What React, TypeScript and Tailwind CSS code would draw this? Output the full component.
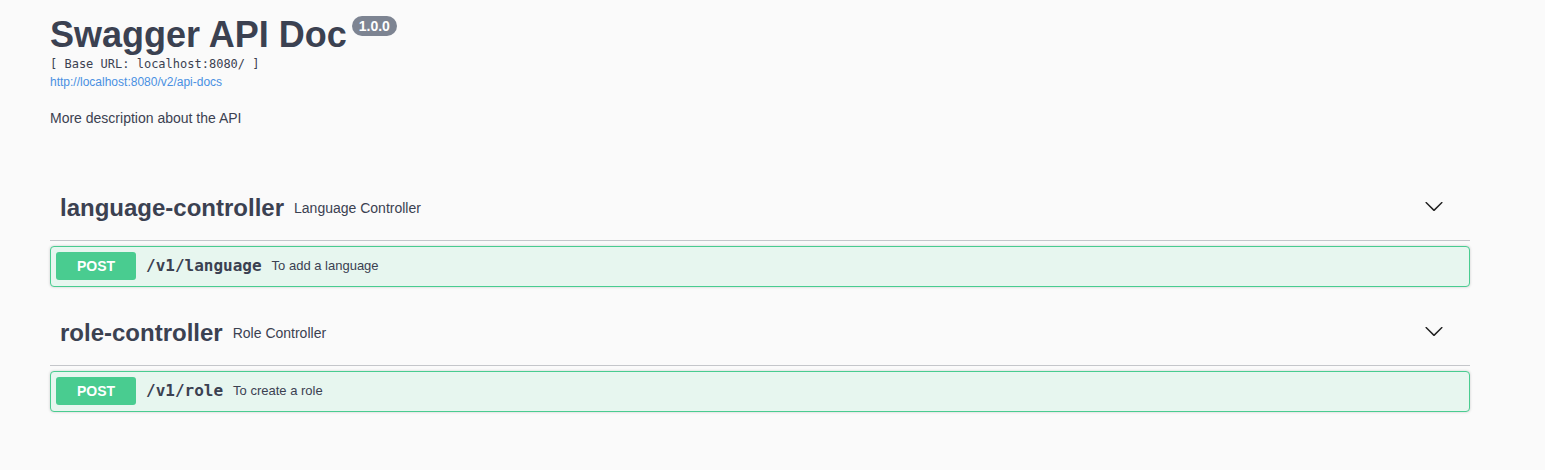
const sans = "font-['Liberation_Sans',Arial,sans-serif]";
const mono = "font-['DejaVu_Sans_Mono',monospace]";

type Op = { method: string; path: string; summary: string };
type Tag = { name: string; description: string; ops: Op[] };

const tags: Tag[] = [
    {
        name: "language-controller",
        description: "Language Controller",
        ops: [{ method: "POST", path: "/v1/language", summary: "To add a language" }],
    },
    {
        name: "role-controller",
        description: "Role Controller",
        ops: [{ method: "POST", path: "/v1/role", summary: "To create a role" }],
    },
];

const Chevron = () => (
    <svg width="20" height="20" viewBox="0 0 20 20" className="mb-[4px] fill-[#1f1f1f]">
        <path d="M17.418 6.109c.272-.268.709-.268.979 0s.271.701 0 .969l-7.908 7.83c-.27.268-.707.268-.979 0l-7.908-7.83c-.27-.268-.27-.701 0-.969.271-.268.709-.268.979 0L10 13.25l7.418-7.141z" />
    </svg>
);

const TagSection = ({ tag }: { tag: Tag }) => (
    <div className="flex flex-col">
        {/* tag header */}
        <div className="flex items-center h-[64px] pl-[10px] pr-[26px] pb-[2px] border-b border-[#c4c6ca] mb-[5px]">
            <h3 className="text-[24px] font-bold leading-[28px] text-[#3b4151]">{tag.name}</h3>
            <small className="ml-[10px] text-[14px] leading-[16px] text-[#3b4151]">{tag.description}</small>
            <div className="flex-1" />
            <Chevron />
        </div>

        {tag.ops.map(op => (
            <div
                key={op.path}
                className="mb-[15px] rounded-[4px] border border-[#49cc90] bg-[#e7f6ef] shadow-[0_0_3px_rgba(0,0,0,0.19)]"
            >
                <div className="flex items-center px-[5px] pt-[5px] pb-[6px]">
                    <span className="w-[80px] h-[28px] rounded-[3px] bg-[#49cc90] text-white text-[14px] font-bold leading-[28px] text-center">
                        {op.method}
                    </span>
                    <span className={`${mono} px-[10px] text-[16px] font-bold text-[#3b4151]`}>{op.path}</span>
                    <span className="text-[13px] text-[#3b4151]">{op.summary}</span>
                </div>
            </div>
        ))}
    </div>
);

export default function App() {
    return (
        <div className={`${sans} min-h-[470px] bg-[#fafafa] pt-[14px] pl-[50px]`}>
            <div className="w-[1420px]">
                {/* info block */}
                <div className="flex items-start">
                    <h2 className="text-[36px] font-bold leading-[41px] text-[#3b4151]">Swagger API Doc</h2>
                    <span className="ml-[5px] mt-[2px] h-[20px] px-[7px] rounded-full bg-[#7d8492] text-white text-[14px] font-bold leading-[20px]">
                        1.0.0
                    </span>
                </div>
                <pre className={`${mono} mt-[2px] text-[12px] leading-[14px] text-[#3b4151]`}>[ Base URL: localhost:8080/ ]</pre>
                <a href="#" className="block mt-[4px] text-[12px] leading-[14px] text-[#4990e2]">
                    http://localhost:8080/v2/api-docs
                </a>
                <p className="mt-[21px] text-[14px] leading-[16px] text-[#3b4151]">More description about the API</p>

                <div className="mt-[51px]">
                    {tags.map(t => (
                        <TagSection key={t.name} tag={t} />
                    ))}
                </div>
            </div>
        </div>
    );
}
